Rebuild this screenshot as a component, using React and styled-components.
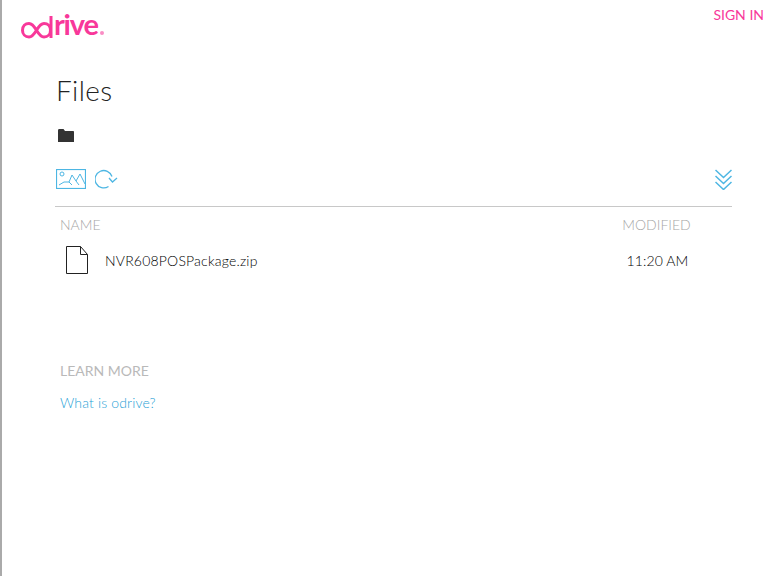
import React from 'react'
import styled, { createGlobalStyle } from 'styled-components'

const GlobalStyle = createGlobalStyle`
  html, body {
    margin: 0;
    padding: 0;
    background: #fff;
    font-family: "Lato", "Open Sans", sans-serif;
  }
`

const Page = styled.div`
  box-sizing: border-box;
  width: 783px;
  height: 576px;
  border-left: 2px solid #aaaaaa;
  overflow: hidden;
`

const TopBar = styled.header`
  display: flex;
  justify-content: space-between;
  align-items: flex-start;
  height: 62px;
  padding: 8px 19px 0 19px;
`

const Logo = styled.div`
  display: flex;
  align-items: flex-end;
  height: 31px;
  color: #f8389a;
  font-size: 29px;
  line-height: 31px;
  font-weight: 700;
  letter-spacing: -1.2px;
`

const LogoMark = styled.svg`
  width: 33px;
  height: 24px;
`

const LogoDot = styled.span`
  width: 4px;
  height: 4px;
  margin: 0 0 4px 2px;
  border-radius: 50%;
  background: #f98dc4;
`

const SignIn = styled.a`
  color: #f8389a;
  font-size: 14px;
  line-height: 14px;
  font-weight: 400;
`

const Content = styled.main`
  padding-left: 53px;
  width: 677px;
`

const Title = styled.h1`
  margin: 0 0 0 1px;
  height: 40px;
  font-size: 28px;
  line-height: 40px;
  font-weight: 300;
  color: #222;
  letter-spacing: 0.4px;
`

const Crumbs = styled.div`
  display: flex;
  align-items: center;
  height: 17px;
  margin: 17px 0 0 3px;
`

const Toolbar = styled.div`
  display: flex;
  justify-content: space-between;
  align-items: center;
  height: 24px;
  margin-top: 23px;
  padding-left: 1px;
`

const ToolGroup = styled.div`
  display: flex;
  align-items: center;
  gap: 9px;
`

const Rule = styled.hr`
  height: 1px;
  margin: 15px 0 0;
  border: 0;
  background: #c8c8c8;
`

const Row = styled.div`
  display: grid;
  grid-template-columns: 1fr 151px;
  align-items: center;
  padding-left: 5px;
  height: ${p => p.$height}px;
`

const HeadCell = styled.div`
  color: #a6a6a6;
  font-size: 14px;
  font-weight: 300;
  text-align: ${p => (p.$right ? 'center' : 'left')};
`

const FileName = styled.div`
  display: flex;
  align-items: center;
  gap: 17px;
  padding-left: 6px;
  color: #000;
  font-size: 14px;
  font-weight: 300;
  letter-spacing: 0.2px;
`

const Time = styled.div`
  color: #000;
  font-size: 14px;
  font-weight: 300;
  text-align: center;
  padding-left: 2px;
  letter-spacing: 0.1px;
`

const Section = styled.section`
  margin-top: 83px;
  padding-left: 5px;
`

const SectionTitle = styled.div`
  color: #b9b9b9;
  font-size: 14px;
  line-height: 18px;
`

const LearnLink = styled.a`
  display: block;
  margin-top: 14px;
  color: #1f9fd6;
  font-size: 14px;
  font-weight: 300;
  line-height: 18px;
  letter-spacing: 0.15px;
`

const blue = '#4db6e3'

export default function App() {
  return (
    <>
      <GlobalStyle />
      <Page>
        <TopBar>
          <Logo>
            <LogoMark viewBox="0 0 33 24" fill="none" stroke="#f8389a" strokeWidth="3">
              <path d="M8 8.500c-3.800 0-6.500 2.800-6.500 6.700s2.700 6.800 6.500 6.800c7 0 8-13.500 15-13.500 3.800 0 6.500 2.800 6.500 6.700s-2.700 6.800-6.500 6.800c-7 0-8-13.500-15-13.500z" />
              <path d="M30 1v22" />
            </LogoMark>
            rive
            <LogoDot />
          </Logo>
          <SignIn>SIGN IN</SignIn>
        </TopBar>
        <Content>
          <Title>Files</Title>
          <Crumbs>
            <svg width="16" height="13" viewBox="0 0 16 13">
              <path d="M0 1.500C0 .7.500 0 1.200 0h4.300l1.500 2h8c.6 0 1 .4 1 1v10H0z" fill="#333" />
            </svg>
          </Crumbs>
          <Toolbar>
            <ToolGroup>
              <svg width="30" height="20" viewBox="0 0 30 20" fill="none" stroke={blue}>
                <rect x=".5" y=".5" width="29" height="19" strokeWidth="1.200" />
                <circle cx="6" cy="5" r="2" />
                <path d="M3 16l5-3h5l3-7 4 6 4-7 5 10M13 13l3 3M20 12l3 4" />
              </svg>
              <svg width="23" height="20" viewBox="0 0 23 20" fill="none" stroke={blue} strokeWidth="1.300">
                <path d="M17 7.500A8.700 8.700 0 1 0 13.500 17.500" />
                <path d="M14 9l3.500 4L22 9" />
              </svg>
            </ToolGroup>
            <svg width="17" height="21" viewBox="0 0 17 21" fill="none" stroke={blue} strokeWidth="1.500">
              <path d="M.5 1l8 7.500 8-7.500M.5 7l8 7.500 8-7.500M.5 13l8 7.500 8-7.500" />
            </svg>
          </Toolbar>
          <Rule />
          <Row $height={34}>
            <HeadCell>NAME</HeadCell>
            <HeadCell $right>MODIFIED</HeadCell>
          </Row>
          <Row $height={38}>
            <FileName>
              <svg width="22" height="28" viewBox="0 0 22 28" fill="none" stroke="#222" strokeWidth="1">
                <path d="M.5.500h14l7 8v19H.5zM14.500.500v8h7" />
              </svg>
              NVR608POSPackage.zip
            </FileName>
            <Time>11:20 AM</Time>
          </Row>
          <Section>
            <SectionTitle>LEARN MORE</SectionTitle>
            <LearnLink>What is odrive?</LearnLink>
          </Section>
        </Content>
      </Page>
    </>
  )
}
